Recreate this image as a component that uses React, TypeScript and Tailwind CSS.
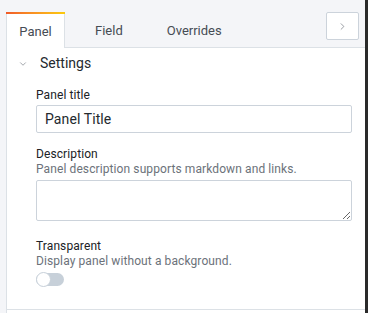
import { ChevronDown, ChevronRight } from 'lucide-react';

export default function App() {
  return (
    <div className="w-[368px] h-[313px] bg-[#f4f5f8] flex overflow-hidden font-['Roboto',sans-serif]">
      <div className="flex-1 flex flex-col pl-[6px]">
        {/* tab bar */}
        <div className="h-[48px] flex items-end shrink-0">
          <div className="relative h-[36px] w-[59px] pt-[3px] bg-white border-x border-[#dce1e6] flex items-center justify-center text-[13px] text-[#464c54]">
            <div className="absolute -left-px -right-px top-0 h-[2px] bg-gradient-to-r from-[#f05a28] to-[#fbca0a]" />
            Panel
          </div>
          <div className="flex-1 h-full flex items-end border-b border-[#dce1e6]">
            <div className="ml-[16px] h-[36px] pt-[3px] px-[14px] flex items-center text-[13px] text-[#464c54]">Field</div>
            <div className="ml-[16px] h-[36px] pt-[3px] px-[14px] flex items-center text-[13px] text-[#464c54]">Overrides</div>
            <div className="ml-auto mr-[6px] self-start mt-[12px] w-[33px] h-[28px] bg-white border border-[#ccd3db] rounded-[2px] flex items-center justify-center">
              <ChevronRight className="w-[11px] h-[11px] text-[#6c727a]" strokeWidth={1.5} />
            </div>
          </div>
        </div>

        {/* body */}
        <div className="flex-1 bg-white border-l border-[#dce1e6] flex flex-col">
          <div className="h-[31px] flex items-center pl-[11px] gap-[12px] text-[14px] text-[#24292e]">
            <ChevronDown className="w-[10px] h-[10px] text-[#6c727a]" strokeWidth={1.5} />
            Settings
          </div>

          <div className="pl-[29px] pr-[13px] flex flex-col tracking-[0.1px]">
            <div className="mt-[8px] text-[12px] leading-[16px] text-[#202226]">Panel title</div>
            <input
              readOnly
              value="Panel Title"
              className="mt-[2px] h-[28px] w-full border border-[#ccd3db] rounded-[2px] px-[8px] text-[14px] text-[#24292e] outline-none"
            />

            <div className="mt-[13px] text-[12px] leading-[16px] text-[#202226]">Description</div>
            <div className="text-[12px] leading-[15px] text-[#6c727a]">Panel description supports markdown and links.</div>
            <textarea
              readOnly
              className="mt-[3px] h-[41px] w-full border border-[#ccd3db] rounded-[2px] px-[8px] text-[14px] outline-none"
            />

            <div className="mt-[18px] text-[12px] leading-[15px] text-[#202226]">Transparent</div>
            <div className="text-[12px] leading-[15px] text-[#6c727a]">Display panel without a background.</div>
            <div className="mt-[4px] w-[28px] h-[13px] rounded-full bg-[#c7d0d9] relative">
              <div className="absolute left-0 top-[-1px] w-[15px] h-[15px] rounded-full bg-white border border-[#c7d0d9]" />
            </div>
          </div>

          <div className="mt-auto mb-[3px] border-t border-[#dce1e6]" />
        </div>
      </div>
      <div className="w-[3px] h-full bg-[#2a2a2a]" />
    </div>
  );
}
